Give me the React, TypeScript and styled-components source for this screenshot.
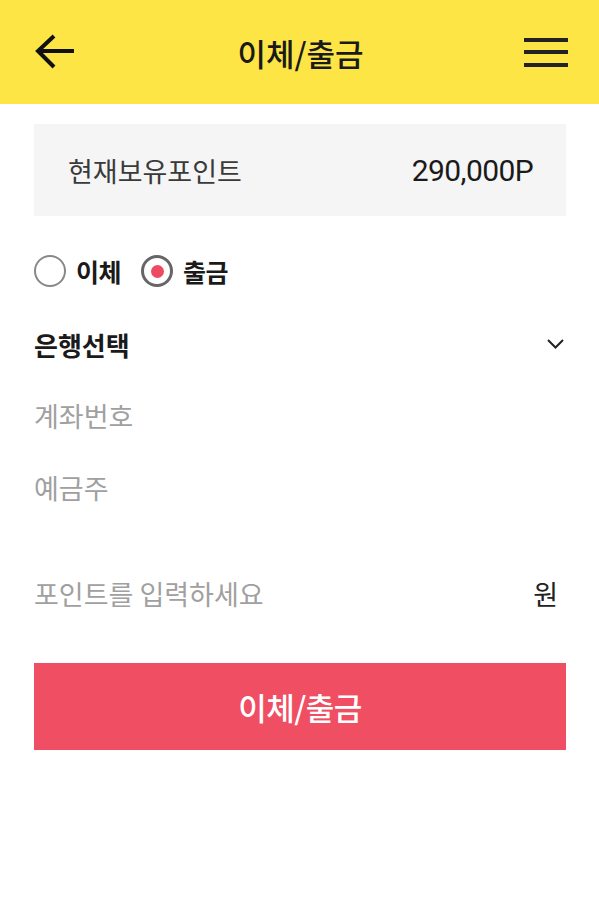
import React from "react";
import styled, { createGlobalStyle } from "styled-components";

const Global = createGlobalStyle`
  html, body { margin: 0; padding: 0; background: #fff; }
  body { font-family: "Noto Sans CJK KR", "Noto Sans", sans-serif; }
  * { box-sizing: border-box; }
`;

const Page = styled.div`
  width: 599px;
  min-height: 900px;
  background: #fff;
  display: flex;
  flex-direction: column;
`;

const Header = styled.header`
  height: 104px;
  background: #fde546;
  display: flex;
  align-items: center;
  justify-content: space-between;
  padding: 0 31px 0 33px;
`;

const IconButton = styled.div`
  width: 44px;
  height: 40px;
  display: flex;
  align-items: center;
  justify-content: center;
`;

const Title = styled.h1`
  margin: 0;
  font-size: 31px;
  font-weight: 500;
  color: #1a1a1a;
  letter-spacing: 0;
`;

const Body = styled.main`
  padding: 20px 33px 0 34px;
  display: flex;
  flex-direction: column;
`;

const PointBox = styled.div`
  height: 92px;
  background: #f5f5f5;
  display: flex;
  align-items: center;
  justify-content: space-between;
  padding: 0 33px 0 34px;
`;

const PointLabel = styled.span`
  font-size: 27px;
  color: #3a3a3a;
`;

const PointValue = styled.span`
  font-family: "Roboto", "Noto Sans", sans-serif;
  font-size: 30px;
  color: #1a1a1a;
  letter-spacing: -0.6px;
`;

const RadioRow = styled.div`
  display: flex;
  align-items: center;
  margin-top: 39px;
  height: 32px;
  gap: 20px;
`;

const RadioItem = styled.label`
  display: flex;
  align-items: center;
  gap: 10px;
  font-size: 25px;
  font-weight: 700;
  color: #1a1a1a;
  letter-spacing: -0.5px;
`;

const RadioCircle = styled.span<{ $checked?: boolean }>`
  width: 32px;
  height: 32px;
  border-radius: 50%;
  border: ${(p) => (p.$checked ? "3px solid #666" : "2px solid #888")};
  display: flex;
  align-items: center;
  justify-content: center;
  &::after {
    content: "";
    width: 13px;
    height: 13px;
    border-radius: 50%;
    background: #ee4a61;
    display: ${(p) => (p.$checked ? "block" : "none")};
  }
`;

const FieldRow = styled.div<{ $top: number }>`
  display: flex;
  align-items: center;
  justify-content: space-between;
  height: 40px;
  margin-top: ${(p) => p.$top}px;
`;

const FieldText = styled.span<{ $strong?: boolean }>`
  font-size: ${(p) => (p.$strong ? 26 : 27)}px;
  font-weight: ${(p) => (p.$strong ? 700 : 400)};
  color: ${(p) => (p.$strong ? "#1a1a1a" : "#a0a0a0")};
  letter-spacing: 0;
`;

const Unit = styled.span`
  font-size: 27px;
  color: #222;
  margin-right: 8px;
`;

const Chevron = styled.span`
  display: flex;
  margin-right: 2px;
`;

const SubmitButton = styled.button`
  margin-top: 50px;
  height: 87px;
  border: none;
  background: #ef4e63;
  color: #fff;
  font-family: "Noto Sans CJK KR", "Noto Sans", sans-serif;
  font-size: 31px;
  font-weight: 500;
  letter-spacing: -0.5px;
  display: flex;
  align-items: center;
  justify-content: center;
`;

export default function App() {
  return (
    <>
      <Global />
      <Page>
        <Header>
          <IconButton>
            <svg width="40" height="36" viewBox="0 0 40 36" fill="none">
              <path d="M39 17H4" stroke="#111" strokeWidth="4" />
              <path d="M19 2L3 17l16 16" stroke="#111" strokeWidth="4" strokeLinejoin="miter" />
            </svg>
          </IconButton>
          <Title>이체/출금</Title>
          <IconButton>
            <svg width="44" height="30" viewBox="0 0 44 30" fill="none">
              <rect x="0" y="1" width="44" height="4" fill="#222" />
              <rect x="0" y="13" width="44" height="4" fill="#222" />
              <rect x="0" y="26" width="44" height="4" fill="#222" />
            </svg>
          </IconButton>
        </Header>
        <Body>
          <PointBox>
            <PointLabel>현재보유포인트</PointLabel>
            <PointValue>290,000P</PointValue>
          </PointBox>
          <RadioRow>
            <RadioItem>
              <RadioCircle />
              이체
            </RadioItem>
            <RadioItem>
              <RadioCircle $checked />
              출금
            </RadioItem>
          </RadioRow>
          <FieldRow $top={37}>
            <FieldText $strong>은행선택</FieldText>
            <Chevron>
              <svg width="17" height="10" viewBox="0 0 17 10" fill="none">
                <path d="M1 1l7.5 7.5L16 1" stroke="#222" strokeWidth="2" />
              </svg>
            </Chevron>
          </FieldRow>
          <FieldRow $top={31}>
            <FieldText>계좌번호</FieldText>
          </FieldRow>
          <FieldRow $top={32}>
            <FieldText>예금주</FieldText>
          </FieldRow>
          <FieldRow $top={66}>
            <FieldText>포인트를 입력하세요</FieldText>
            <Unit>원</Unit>
          </FieldRow>
          <SubmitButton>이체/출금</SubmitButton>
        </Body>
      </Page>
    </>
  );
}
